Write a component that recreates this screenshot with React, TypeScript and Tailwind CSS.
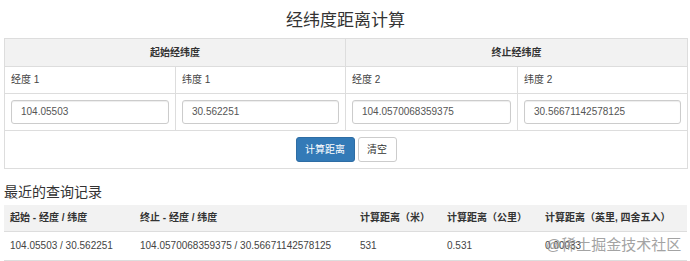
import React from "react";

const font = { fontFamily: '"Liberation Sans", "Noto Sans CJK SC", Arial, sans-serif' };

export default function App() {
  const inputCls =
    "block w-full h-[24px] rounded-[3px] border border-[#cccccc] bg-white px-[9px] text-[10px] leading-[22px] text-[#555555] shadow-[inset_0_1px_1px_rgba(0,0,0,0.075)]";
  const td = "border border-[#dddddd] px-[6px] py-[6px] align-middle";
  return (
    <div className="relative w-[690px] h-[261px] overflow-hidden bg-white text-[#333333]" style={font}>
      <div className="pl-[4px] pr-[3px]">
        <h1 className="pt-[9px] h-[32px] mb-[6px] text-center text-[17px] leading-[24px] font-normal">
          经纬度距离计算
        </h1>
        <table className="w-full table-fixed border-collapse text-[10px]">
          <colgroup>
            <col className="w-[171px]" />
            <col className="w-[170px]" />
            <col className="w-[172px]" />
            <col className="w-[170px]" />
          </colgroup>
          <tbody>
            <tr className="bg-[#f2f2f2]">
              <th colSpan={2} className={`${td} text-center font-bold leading-[15px]`}>
                起始经纬度
              </th>
              <th colSpan={2} className={`${td} text-center font-bold leading-[15px]`}>
                终止经纬度
              </th>
            </tr>
            <tr className="text-[#444444]">
              <td className={`${td} leading-[14px]`}>经度 1</td>
              <td className={`${td} leading-[14px]`}>纬度 1</td>
              <td className={`${td} leading-[14px]`}>经度 2</td>
              <td className={`${td} leading-[14px]`}>纬度 2</td>
            </tr>
            <tr>
              <td className={td}>
                <div className={inputCls}>104.05503</div>
              </td>
              <td className={td}>
                <div className={inputCls}>30.562251</div>
              </td>
              <td className={td}>
                <div className={inputCls}>104.0570068359375</div>
              </td>
              <td className={td}>
                <div className={inputCls}>30.56671142578125</div>
              </td>
            </tr>
            <tr>
              <td colSpan={4} className={td}>
                <div className="flex justify-center gap-[3px]">
                  <button className="h-[25px] w-[59px] rounded-[3px] border border-[#2e6da4] bg-[#337ab7] text-[10px] text-white">
                    计算距离
                  </button>
                  <button className="h-[25px] w-[39px] rounded-[3px] border border-[#cccccc] bg-white text-[10px] text-[#333333]">
                    清空
                  </button>
                </div>
              </td>
            </tr>
          </tbody>
        </table>
        <h4 className="mt-[13px] mb-[3px] text-[14px] leading-[20px] font-normal">最近的查询记录</h4>
        <table className="w-full table-fixed border-collapse text-[10px]">
          <colgroup>
            <col className="w-[130px]" />
            <col className="w-[220px]" />
            <col className="w-[87px]" />
            <col className="w-[98px]" />
            <col className="w-[148px]" />
          </colgroup>
          <thead>
            <tr className="bg-[#f2f2f2]">
              <th className="px-[6px] py-[6px] text-left font-bold leading-[14px] border-b border-[#dddddd]">起始 - 经度 / 纬度</th>
              <th className="px-[6px] py-[6px] text-left font-bold leading-[14px] border-b border-[#dddddd]">终止 - 经度 / 纬度</th>
              <th className="px-[6px] py-[6px] text-left font-bold leading-[14px] border-b border-[#dddddd] whitespace-nowrap">计算距离（米）</th>
              <th className="px-[6px] py-[6px] text-left font-bold leading-[14px] border-b border-[#dddddd] whitespace-nowrap">计算距离（公里）</th>
              <th className="px-[6px] py-[6px] text-left font-bold leading-[14px] border-b border-[#dddddd] whitespace-nowrap">计算距离（英里, 四舍五入）</th>
            </tr>
          </thead>
          <tbody>
            <tr className="text-[#444444]">
              <td className="px-[6px] py-[7px] leading-[14px] border-b border-[#dddddd] whitespace-nowrap">104.05503 / 30.562251</td>
              <td className="px-[6px] py-[7px] leading-[14px] border-b border-[#dddddd] whitespace-nowrap">104.0570068359375 / 30.56671142578125</td>
              <td className="px-[6px] py-[7px] leading-[14px] border-b border-[#dddddd]">531</td>
              <td className="px-[6px] py-[7px] leading-[14px] border-b border-[#dddddd]">0.531</td>
              <td className="px-[6px] py-[7px] leading-[14px] border-b border-[#dddddd]">0.00033</td>
            </tr>
          </tbody>
        </table>
      </div>
      <div className="absolute left-[546px] top-[236px] text-[15px] leading-[18px] text-[#9a9a9a] opacity-90 whitespace-nowrap">
        @稀土掘金技术社区
      </div>
    </div>
  );
}
